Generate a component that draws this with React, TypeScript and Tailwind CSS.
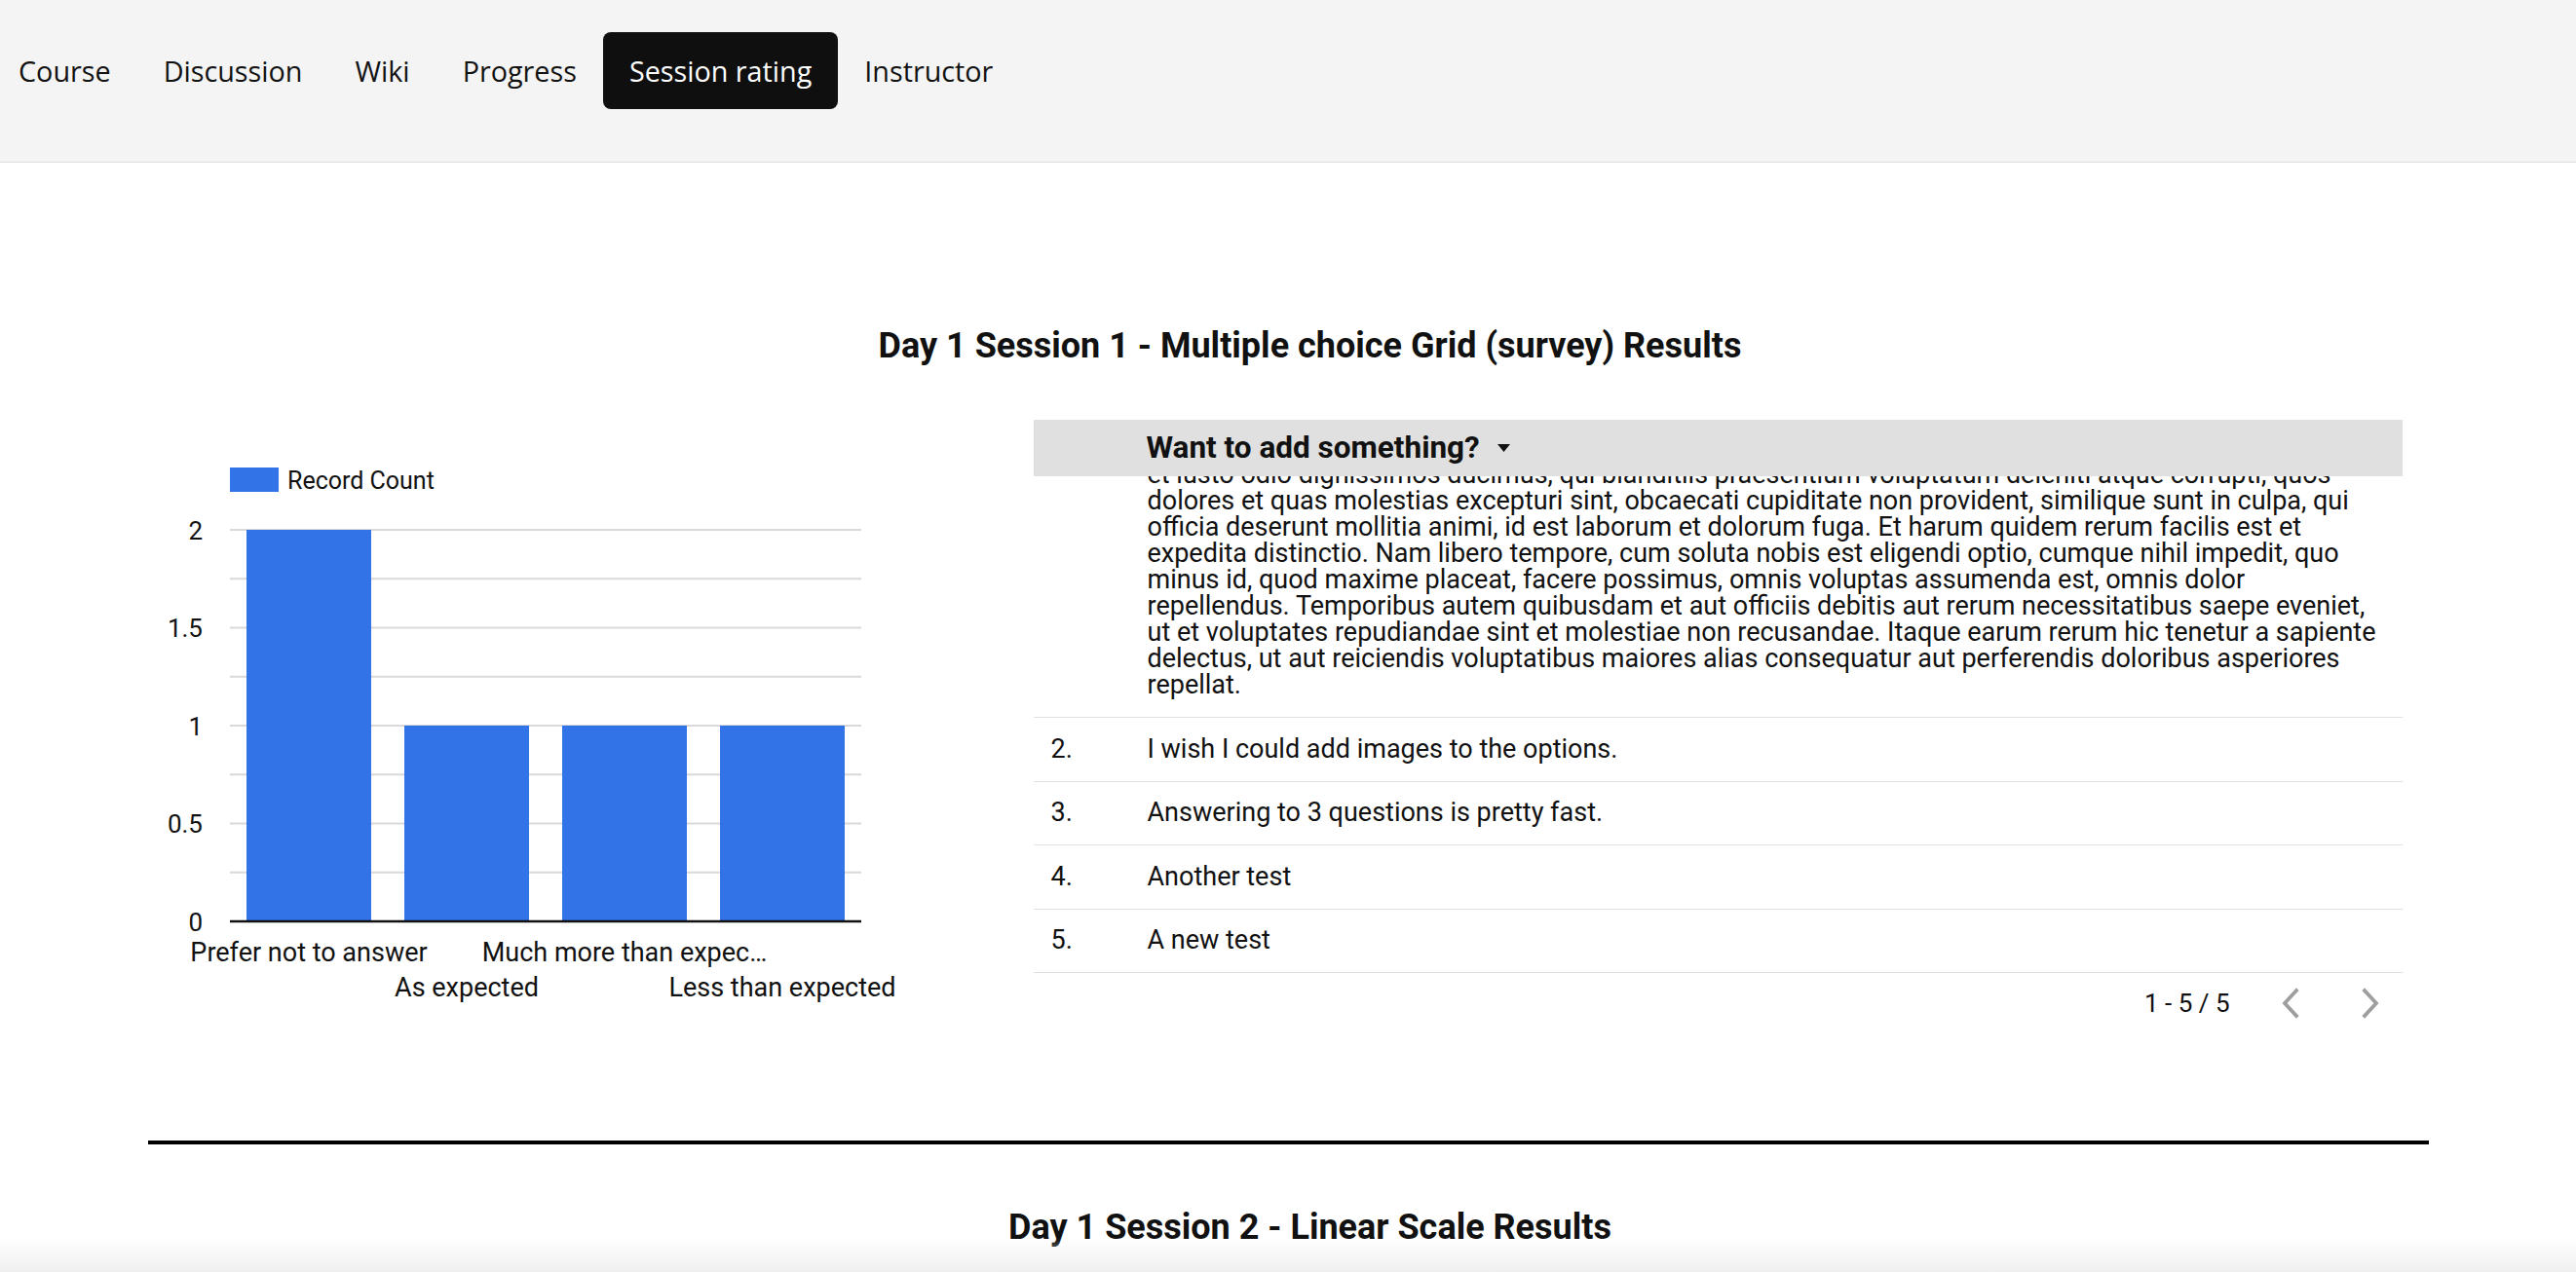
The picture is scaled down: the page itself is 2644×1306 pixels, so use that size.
import React from "react";

const tabs = ["Course", "Discussion", "Wiki", "Progress", "Session rating", "Instructor"];
const activeTab = "Session rating";

// first answer is long, the table body is scrolled part way into it
const firstAnswer = [
  "At vero eos et accusamus",
  "et iusto odio dignissimos ducimus, qui blanditiis praesentium voluptatum deleniti atque corrupti, quos",
  "dolores et quas molestias excepturi sint, obcaecati cupiditate non provident, similique sunt in culpa, qui",
  "officia deserunt mollitia animi, id est laborum et dolorum fuga. Et harum quidem rerum facilis est et",
  "expedita distinctio. Nam libero tempore, cum soluta nobis est eligendi optio, cumque nihil impedit, quo",
  "minus id, quod maxime placeat, facere possimus, omnis voluptas assumenda est, omnis dolor",
  "repellendus. Temporibus autem quibusdam et aut officiis debitis aut rerum necessitatibus saepe eveniet,",
  "ut et voluptates repudiandae sint et molestiae non recusandae. Itaque earum rerum hic tenetur a sapiente",
  "delectus, ut aut reiciendis voluptatibus maiores alias consequatur aut perferendis doloribus asperiores",
  "repellat.",
];

const answers = [
  "I wish I could add images to the options.",
  "Answering to 3 questions is pretty fast.",
  "Another test",
  "A new test",
];

const bars = [
  { label: "Prefer not to answer", value: 2, row: 0 },
  { label: "As expected", value: 1, row: 1 },
  { label: "Much more than expec…", value: 1, row: 0 },
  { label: "Less than expected", value: 1, row: 1 },
];

const BLUE = "#3273e8";

const BarChart = () => {
  const plotLeft = 84;
  const plotRight = 732;
  const top = 113;
  const bottom = 515;
  const step = (bottom - top) / 8;
  const slot = (plotRight - plotLeft) / bars.length;
  const yFor = (v: number) => bottom - (v / 2) * (bottom - top);

  return (
    <svg width="800" height="620" viewBox="0 0 800 620" className="shrink-0" style={{ fontFamily: "Roboto, sans-serif" }}>
      <rect x="84" y="49" width="50" height="25" fill={BLUE} />
      <text x="143" y="71" fontSize="25" fill="#111">
        Record Count
      </text>

      {Array.from({ length: 8 }).map((_, i) => (
        <line key={i} x1={plotLeft} x2={plotRight} y1={top + i * step} y2={top + i * step} stroke="#d9d9d9" strokeWidth="2" />
      ))}

      {[2, 1.5, 1, 0.5, 0].map((v) => (
        <text key={v} x="56" y={yFor(v) + 9.5} fontSize="26" textAnchor="end" fill="#111">
          {v}
        </text>
      ))}

      {bars.map((b, i) => {
        const x = plotLeft + i * slot + 17;
        const y = yFor(b.value);
        return <rect key={b.label} x={x} y={y} width={128} height={bottom - y} fill={BLUE} />;
      })}

      <line x1={plotLeft} x2={plotRight} y1={bottom} y2={bottom} stroke="#111" strokeWidth="2.5" />

      {bars.map((b, i) => (
        <text
          key={b.label}
          x={plotLeft + i * slot + slot / 2}
          y={b.row === 0 ? 556 : 592}
          fontSize="27"
          textAnchor="middle"
          fill="#111"
        >
          {b.label}
        </text>
      ))}
    </svg>
  );
};

const Chevron = ({ dir }: { dir: "left" | "right" }) => (
  <svg width="20" height="32" viewBox="0 0 20 32" fill="none">
    <polyline
      points={dir === "left" ? "16,3 4,16 16,29" : "4,3 16,16 4,29"}
      stroke="#9e9e9e"
      strokeWidth="3.75"
      strokeLinecap="square"
    />
  </svg>
);

const ResponsesTable = () => (
  <div className="ml-[109px] w-[1405px] text-[#111]">
    <div className="flex h-[58px] items-center bg-[#e0e0e0] pl-[116px]">
      <span className="text-[31.5px] font-bold leading-[38px]">Want to add something?</span>
      <svg width="13" height="8" viewBox="0 0 13 8" className="ml-[18px]">
        <polygon points="0,0 13,0 6.5,8" fill="#111" />
      </svg>
    </div>

    <div className="h-[510px] overflow-hidden">
      <div className="-mt-[61px]">
        <div className="flex border-b border-[#e0e0e0] py-[19px] text-[27px] leading-[27px]">
          <div className="w-[117px] shrink-0 pl-[18px]">1.</div>
          <div className="whitespace-nowrap">
            {firstAnswer.map((line) => (
              <span key={line} className="block">
                {line}
              </span>
            ))}
          </div>
        </div>
        {answers.map((a, i) => (
          <div key={a} className="flex border-b border-[#e0e0e0] py-[18.75px] text-[27px] leading-[27px]">
            <div className="w-[117px] shrink-0 pl-[18px]">{i + 2}.</div>
            <div>{a}</div>
          </div>
        ))}
      </div>
    </div>

    <div className="flex h-[62px] items-center justify-end pr-[23px] text-[26px]">
      <span>1 - 5 / 5</span>
      <div className="ml-[52px]">
        <Chevron dir="left" />
      </div>
      <div className="ml-[62px]">
        <Chevron dir="right" />
      </div>
    </div>
  </div>
);

export default function App() {
  return (
    <div className="min-h-screen bg-white">
      <nav className="border-b border-[#dddddd] bg-[#f4f4f4] pt-[33px] pb-[54px]" style={{ fontFamily: '"Open Sans", sans-serif' }}>
        <ul className="-ml-[8px] flex">
          {tabs.map((t) => (
            <li
              key={t}
              className={
                t === activeTab
                  ? "rounded-[8px] bg-[#0f0f0f] px-[27px] py-[20px] text-[28.75px] leading-[39px] text-white"
                  : "px-[27px] py-[20px] text-[28.75px] leading-[39px] text-[#111]"
              }
            >
              {t}
            </li>
          ))}
        </ul>
      </nav>

      <main className="mx-auto w-[2341px] pt-[167px]" style={{ fontFamily: "Roboto, sans-serif" }}>
        <h1 className="pl-[45px] text-center text-[36px] font-bold leading-[42px] text-[#111]">
          Day 1 Session 1 - Multiple choice Grid (survey) Results
        </h1>

        <div className="mt-[55px] flex items-start">
          <BarChart />
          <ResponsesTable />
        </div>

        <div className="mt-[110px] h-[4px] bg-black" />

        <h2 className="mt-[64px] pl-[45px] text-center text-[36px] font-bold leading-[42px] text-[#111]">
          Day 1 Session 2 - Linear Scale Results
        </h2>
        <div className="h-[200px]" />
      </main>

      <div className="pointer-events-none fixed inset-x-0 bottom-0 h-[34px] bg-gradient-to-b from-transparent to-[#efefef]" />
    </div>
  );
}
